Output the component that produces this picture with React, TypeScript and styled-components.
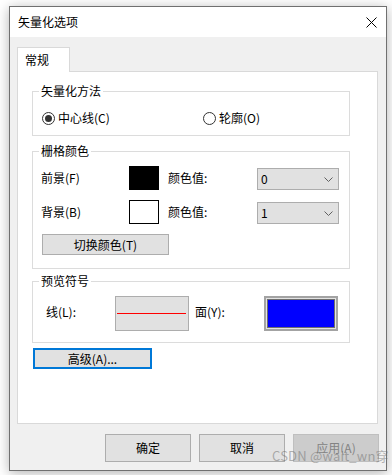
import React from 'react';
import styled, { createGlobalStyle } from 'styled-components';

const GlobalStyle = createGlobalStyle`
  html, body {
    margin: 0;
    padding: 0;
    background: #fff;
  }
  body {
    font-family: 'Noto Sans CJK SC', 'Microsoft YaHei', sans-serif;
    font-size: 12px;
    color: #000;
  }
`;

const Page = styled.div`
  position: relative;
  width: 392px;
  height: 475px;
  overflow: hidden;
  padding-top: 6px;
  box-sizing: border-box;
`;

const Window = styled.div`
  width: 378px;
  height: 465px;
  margin-left: 9px;
  box-sizing: border-box;
  border: 1px solid #707070;
  background: #f0f0f0;
  box-shadow: 0 2px 12px rgba(0, 0, 0, 0.3);
  display: flex;
  flex-direction: column;
`;

const TitleBar = styled.div`
  height: 30px;
  flex-shrink: 0;
  background: #fff;
  display: flex;
  align-items: center;
  justify-content: space-between;
  padding: 0 9px 0 8px;
  line-height: 16px;
`;

const Body = styled.div`
  flex: 1;
  display: flex;
  flex-direction: column;
  padding: 10px 7px 0 7px;
`;

const TabStrip = styled.div`
  display: flex;
`;

const Tab = styled.div`
  position: relative;
  z-index: 1;
  width: 53px;
  height: 25px;
  box-sizing: border-box;
  border: 1px solid #d9d9d9;
  border-bottom: none;
  background: #fff;
  padding: 4px 0 0 7px;
  line-height: 16px;
  margin-bottom: -1px;
`;

const Panel = styled.div`
  height: 353px;
  margin-right: 1px;
  box-sizing: border-box;
  border: 1px solid #d9d9d9;
  background: #fff;
  display: flex;
  flex-direction: column;
  align-items: flex-start;
`;

const Group = styled.div<{ $mt: number }>`
  position: relative;
  width: 318px;
  box-sizing: border-box;
  margin: ${(p) => p.$mt}px 0 0 14px;
  border: 1px solid #dcdcdc;
`;

const GroupTitle = styled.span`
  position: absolute;
  top: -9px;
  left: 6px;
  padding: 0 2px;
  background: #fff;
  line-height: 16px;
`;

const RadioRow = styled.div`
  display: grid;
  grid-template-columns: 161px auto;
  padding: 18px 0 9px 9px;
  line-height: 16px;
`;

const RadioItem = styled.label`
  display: flex;
  align-items: center;
  gap: 3px;
`;

const RadioCircle = styled.span<{ $checked?: boolean }>`
  width: 13px;
  height: 13px;
  box-sizing: border-box;
  border: 1px solid #333;
  border-radius: 50%;
  background: #fff;
  display: flex;
  align-items: center;
  justify-content: center;

  &::after {
    content: '';
    width: 7px;
    height: 7px;
    border-radius: 50%;
    background: ${(p) => (p.$checked ? '#333' : 'transparent')};
  }
`;

const ColorSection = styled.div`
  padding: 14px 0 13px 8px;
`;

const ColorGrid = styled.div`
  display: grid;
  grid-template-columns: 88px 30px 98px 82px;
  grid-auto-rows: 24px;
  row-gap: 10px;
  align-items: center;
  line-height: 16px;
`;

const Swatch = styled.div<{ $color: string }>`
  width: 30px;
  height: 24px;
  box-sizing: border-box;
  border: 1px solid #000;
  background: ${(p) => p.$color};
`;

const ValueLabel = styled.span`
  padding-left: 9px;
`;

const Combo = styled.div`
  align-self: end;
  height: 22px;
  box-sizing: border-box;
  border: 1px solid #adadad;
  background: #e1e1e1;
  display: flex;
  align-items: center;
  justify-content: space-between;
  padding: 0 5px 0 3px;
  line-height: 16px;
`;

const Button = styled.button<{ $w: number; $h: number; $focus?: boolean }>`
  width: ${(p) => p.$w}px;
  height: ${(p) => p.$h}px;
  box-sizing: border-box;
  border: ${(p) => (p.$focus ? '2px solid #0078d7' : '1px solid #adadad')};
  background: #e1e1e1;
  font: inherit;
  line-height: 16px;
  color: #000;
  padding: 0;
  display: flex;
  align-items: center;
  justify-content: center;

  &:disabled {
    background: #cccccc;
    border-color: #bfbfbf;
    color: #838383;
  }
`;

const SwitchButton = styled(Button)`
  margin: 10px 0 0 1px;
`;

const AdvancedButton = styled(Button)`
  margin: 5px 0 0 15px;
`;

const PreviewRow = styled.div`
  display: flex;
  align-items: center;
  padding: 14px 0 11px 13px;
  line-height: 16px;
`;

const PreviewLabel = styled.span<{ $ml?: number }>`
  width: 69px;
  margin-left: ${(p) => p.$ml ?? 0}px;
  padding-bottom: 4px;
`;

const LinePreview = styled.div`
  width: 74px;
  height: 35px;
  box-sizing: border-box;
  border: 1px solid #adadad;
  background: #e1e1e1;
  display: flex;
  align-items: center;
  padding: 0 2px 0 1px;

  &::after {
    content: '';
    flex: 1;
    height: 1px;
    background: #ff0000;
  }
`;

const FillPreview = styled.div`
  width: 74px;
  height: 35px;
  box-sizing: border-box;
  border: 2px solid #a3a3a3;
  background: #e3e3e3;
  padding: 1px;
  display: flex;
`;

const FillInner = styled.div`
  flex: 1;
  border: 1px solid #6e6e6e;
  background: #0000ff;
`;

const Footer = styled.div`
  display: flex;
  justify-content: flex-end;
  gap: 8px;
  margin-top: 10px;
`;

const Watermark = styled.div`
  position: absolute;
  left: 272px;
  top: 448px;
  font-size: 13px;
  line-height: 16px;
  color: rgba(110, 110, 110, 0.5);
  letter-spacing: 0.2px;
  pointer-events: none;
`;

const Chevron = () => (
  <svg width="9" height="5" viewBox="0 0 9 5">
    <path d="M0.5 0.5 L4.5 4.5 L8.5 0.5" fill="none" stroke="#606060" strokeWidth="1" />
  </svg>
);

const CloseIcon = () => (
  <svg width="11" height="11" viewBox="0 0 11 11">
    <path d="M0.5 0.5 L10.5 10.5 M10.5 0.5 L0.5 10.5" stroke="#000" strokeWidth="1" />
  </svg>
);

const App = () => {
  return (
    <Page>
      <GlobalStyle />
      <Window>
        <TitleBar>
          <span>矢量化选项</span>
          <CloseIcon />
        </TitleBar>
        <Body>
          <TabStrip>
            <Tab>常规</Tab>
          </TabStrip>
          <Panel>
            <Group $mt={19}>
              <GroupTitle>矢量化方法</GroupTitle>
              <RadioRow>
                <RadioItem>
                  <RadioCircle $checked />
                  中心线(C)
                </RadioItem>
                <RadioItem>
                  <RadioCircle />
                  轮廓(O)
                </RadioItem>
              </RadioRow>
            </Group>

            <Group $mt={15}>
              <GroupTitle>栅格颜色</GroupTitle>
              <ColorSection>
                <ColorGrid>
                  <span>前景(F)</span>
                  <Swatch $color="#000" />
                  <ValueLabel>颜色值:</ValueLabel>
                  <Combo>
                    <span>0</span>
                    <Chevron />
                  </Combo>
                  <span>背景(B)</span>
                  <Swatch $color="#fff" />
                  <ValueLabel>颜色值:</ValueLabel>
                  <Combo>
                    <span>1</span>
                    <Chevron />
                  </Combo>
                </ColorGrid>
                <SwitchButton $w={127} $h={21}>切换颜色(T)</SwitchButton>
              </ColorSection>
            </Group>

            <Group $mt={12}>
              <GroupTitle>预览符号</GroupTitle>
              <PreviewRow>
                <PreviewLabel>线(L):</PreviewLabel>
                <LinePreview />
                <PreviewLabel $ml={6}>面(Y):</PreviewLabel>
                <FillPreview>
                  <FillInner />
                </FillPreview>
              </PreviewRow>
            </Group>

            <AdvancedButton $w={119} $h={21} $focus>高级(A)...</AdvancedButton>
          </Panel>

          <Footer>
            <Button $w={86} $h={28}>确定</Button>
            <Button $w={86} $h={28}>取消</Button>
            <Button $w={86} $h={28} disabled>应用(A)</Button>
          </Footer>
        </Body>
      </Window>
      <Watermark>CSDN @wait_wn穿</Watermark>
    </Page>
  );
};

export default App;
